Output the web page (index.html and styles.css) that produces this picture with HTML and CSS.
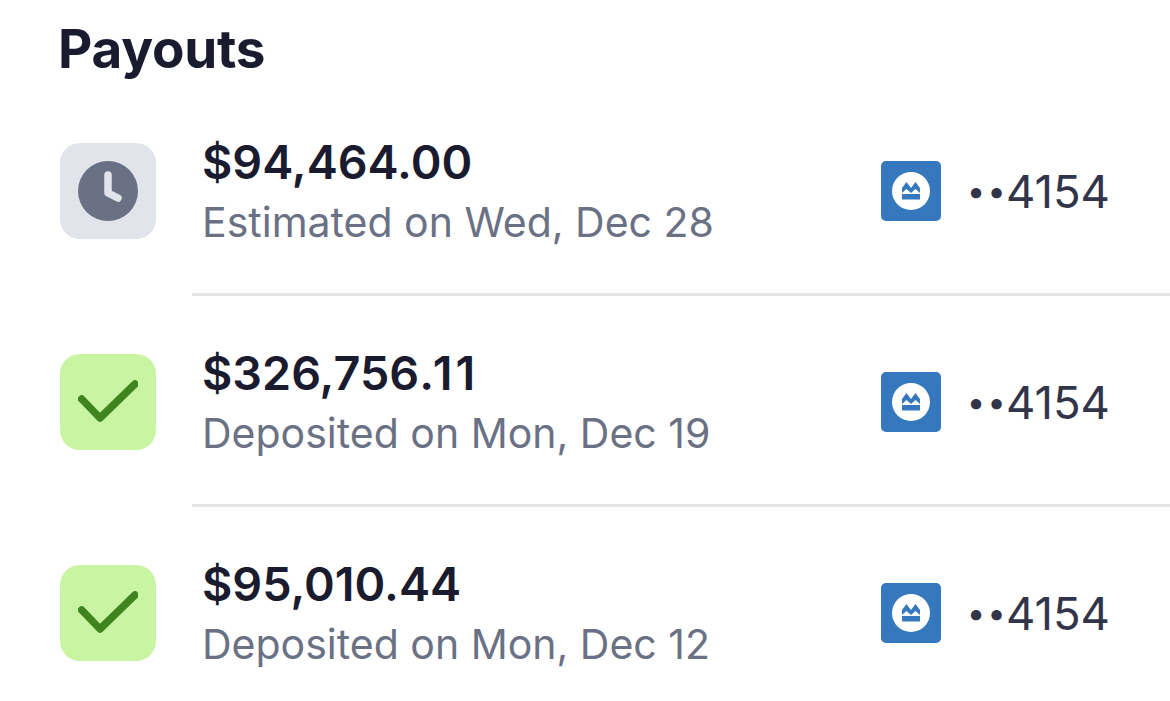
FILE: index.html
```html
<!DOCTYPE html>
<html lang="en">
<head>
    <meta charset="UTF-8">
    <meta name="viewport" content="width=device-width, initial-scale=1.0">
    <title>Payouts</title>
    <link rel="stylesheet" href="styles.css">
</head>
<body>
    <div class="container">
        <h1>Payouts</h1>

        <!-- Payout list -->
        <div class="payout">
            <div class="status status-pending">
                <svg width="60" height="60" viewBox="0 0 60 60">
                    <circle cx="30" cy="30" r="30" fill="#6b7185"/>
                    <path d="M30 14V32L40 37" fill="none" stroke="#e1e4ea" stroke-width="7.500" stroke-linecap="round" stroke-linejoin="round"/>
                </svg>
            </div>
            <div class="info">
                <div class="amount">$94,464.00</div>
                <div class="note">Estimated on Wed, Dec 28</div>
            </div>
            <div class="account">
                <div class="bank">
                    <svg width="60" height="60" viewBox="0 0 60 60">
                        <circle cx="30" cy="30" r="19" fill="#fff"/>
                        <path d="M21 32V27L25.500 21L30 27L34.500 21L39 27V32L34.500 28L30 32L25.500 28Z M21 33H39V38.500H21Z" fill="#3578be"/>
                    </svg>
                </div>
                <span class="digits"><span class="dots">••</span>4154</span>
            </div>
        </div>

        <div class="payout">
            <div class="status status-done">
                <svg width="60" height="48" viewBox="0 0 60 48">
                    <path d="M3.700 21L22 40L57 6" fill="none" stroke="#3f841f" stroke-width="7.500" stroke-linecap="round" stroke-linejoin="round"/>
                </svg>
            </div>
            <div class="info">
                <div class="amount">$326,756<span class="ones">.11</span></div>
                <div class="note">Deposited on Mon, Dec 19</div>
            </div>
            <div class="account">
                <div class="bank">
                    <svg width="60" height="60" viewBox="0 0 60 60">
                        <circle cx="30" cy="30" r="19" fill="#fff"/>
                        <path d="M21 32V27L25.500 21L30 27L34.500 21L39 27V32L34.500 28L30 32L25.500 28Z M21 33H39V38.500H21Z" fill="#3578be"/>
                    </svg>
                </div>
                <span class="digits"><span class="dots">••</span>4154</span>
            </div>
        </div>

        <div class="payout">
            <div class="status status-done">
                <svg width="60" height="48" viewBox="0 0 60 48">
                    <path d="M3.700 21L22 40L57 6" fill="none" stroke="#3f841f" stroke-width="7.500" stroke-linecap="round" stroke-linejoin="round"/>
                </svg>
            </div>
            <div class="info">
                <div class="amount">$95,010.44</div>
                <div class="note">Deposited on Mon, Dec 12</div>
            </div>
            <div class="account">
                <div class="bank">
                    <svg width="60" height="60" viewBox="0 0 60 60">
                        <circle cx="30" cy="30" r="19" fill="#fff"/>
                        <path d="M21 32V27L25.500 21L30 27L34.500 21L39 27V32L34.500 28L30 32L25.500 28Z M21 33H39V38.500H21Z" fill="#3578be"/>
                    </svg>
                </div>
                <span class="digits"><span class="dots">••</span>4154</span>
            </div>
        </div>
    </div>
</body>
</html>
```

FILE: styles.css
```css
body {
    font-family: 'Inter', 'Liberation Sans', sans-serif;
    background-color: #fff;
    margin: 0;
    overflow: hidden;
}

.container {
    padding-left: 60px;
}

h1 {
    margin: 0 0 0 -2px;
    padding-top: 19px;
    height: 68px;
    font-size: 53px;
    line-height: 60px;
    font-weight: 700;
    letter-spacing: -0.200px;
    color: #1a1b2e;
}

.payout {
    display: flex;
    align-items: center;
    padding: 56px 0 59px;
    height: 96px;
}

.status {
    flex: none;
    width: 96px;
    height: 96px;
    border-radius: 20px;
    display: flex;
    align-items: center;
    justify-content: center;
}

.status-pending {
    background-color: #e1e4ea;
}

.status-done {
    background-color: #c9f5a3;
}

.info {
    flex: 1;
    margin-left: 46px;
    align-self: stretch;
}

.amount {
    margin-top: -9px;
    margin-bottom: 9px;
    font-size: 46.700px;
    line-height: 56px;
    font-weight: 600;
    color: #1a1b2e;
}

.ones {
    letter-spacing: 3px;
}

.note {
    font-size: 41px;
    line-height: 46px;
    color: #6b7185;
}

.account {
    display: flex;
    align-items: center;
    margin-right: 60px;
}

.bank {
    width: 60px;
    height: 60px;
    border-radius: 5px;
    background-color: #3578be;
    margin-right: 26px;
}

.bank svg {
    display: block;
}

.digits {
    padding-top: 2px;
    font-size: 45.500px;
    line-height: 56px;
    color: #32354a;
}

.dots {
    font-size: 33px;
    line-height: 1;
    letter-spacing: 2px;
    margin-right: -2px;
    vertical-align: 5px;
}

.payout + .payout {
    position: relative;
}

.payout + .payout::before {
    content: "";
    position: absolute;
    top: -5px;
    left: 132px;
    right: 0;
    height: 3px;
    background-color: #e3e6e8;
}
```
